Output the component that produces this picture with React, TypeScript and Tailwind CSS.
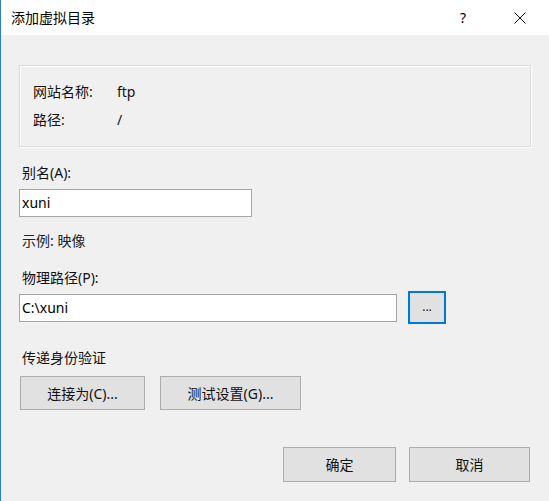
import type { ReactNode } from "react";

// Windows-style "add virtual directory" dialog

const font = "font-['Noto_Sans','Noto_Sans_CJK_SC',sans-serif]";

function Label({ children, className = "" }: { children: ReactNode; className?: string }) {
  return <div className={`ml-[3px] h-5 text-[14px] leading-5 text-[#111] ${className}`}>{children}</div>;
}

function TextBox({ value, width }: { value: string; width: string }) {
  return (
    <div
      className={`${width} h-[28px] border border-[#a5a5a5] bg-white pl-[2px] text-[14px] leading-[26px] text-black`}
    >
      {value}
    </div>
  );
}

function Button({ children, width, className = "" }: { children: ReactNode; width: string; className?: string }) {
  return (
    <button
      type="button"
      className={`${width} flex items-center justify-center border border-[#adadad] bg-[#e1e1e1] text-[14px] text-[#111] ${className}`}
    >
      {children}
    </button>
  );
}

export default function App() {
  return (
    <div className={`${font} w-[549px] h-[501px] flex flex-col border-l border-[#2b7cd3] bg-[#f0f0f0]`}>
      {/* title bar */}
      <div className="h-[35px] bg-white flex items-center">
        <span className="ml-[10px] text-[14px] text-black">添加虚拟目录</span>
        <span className="ml-auto mr-[48px] text-[14px] text-black">?</span>
        <svg width="12" height="12" viewBox="0 0 12 12" className="mr-[23px]">
          <path d="M0.5 0.5 L11.5 11.5 M11.5 0.5 L0.5 11.5" stroke="#111" strokeWidth="1" />
        </svg>
      </div>

      <div className="flex flex-col pl-[18px] pr-[18px]">
        {/* site info group */}
        <div className="mt-[30px] h-[82px] border border-[#dcdcdc] shadow-[inset_1px_1px_0_#fff,1px_1px_0_#fff] pt-4 pl-[13px] flex flex-col gap-2">
          <div className="flex h-5 text-[14px] leading-5 text-[#111]">
            <span className="w-[84px]">网站名称:</span>
            <span>ftp</span>
          </div>
          <div className="flex h-5 text-[14px] leading-5 text-[#111]">
            <span className="w-[84px]">路径:</span>
            <span>/</span>
          </div>
        </div>

        <Label className="mt-4">别名(A):</Label>
        <div className="mt-[6px]">
          <TextBox value="xuni" width="w-[233px]" />
        </div>

        <Label className="mt-[14px] text-[#222]">示例: 映像</Label>

        <Label className="mt-[17px]">物理路径(P):</Label>
        <div className="mt-[3px] flex items-center gap-[11px]">
          <TextBox value="C:\xuni" width="w-[378px]" />
          <button
            type="button"
            className="w-[38px] h-[33px] border-2 border-[#0078d7] bg-[#e5f1fb] flex items-center justify-center"
          >
            <span className="w-full h-full border border-[#cce4f7] bg-[#e1e1e1] flex items-center justify-center text-[12px] leading-none text-[#111] pb-[2px]">
              ...
            </span>
          </button>
        </div>

        <Label className="mt-6">传递身份验证</Label>
        <div className="mt-2 ml-[1px] flex gap-[15px]">
          <Button width="w-[125px] h-[34px]">连接为(C)...</Button>
          <Button width="w-[141px] h-[34px]">测试设置(G)...</Button>
        </div>

        <div className="mt-[37px] flex justify-end gap-[13px] pr-px">
          <Button width="w-[113px] h-[35px]">确定</Button>
          <Button width="w-[121px] h-[35px]">取消</Button>
        </div>
      </div>
    </div>
  );
}
